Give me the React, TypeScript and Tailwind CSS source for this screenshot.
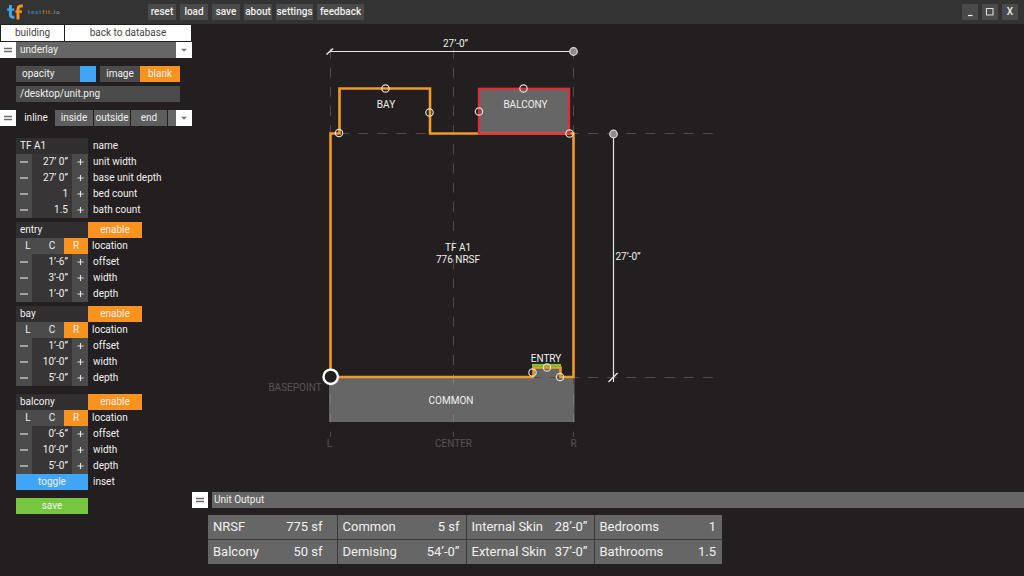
import { useState } from "react";

const FONT = "font-['Roboto','Liberation_Sans',sans-serif]";

function Grip() {
  return (
    <svg viewBox="0 0 16 16" className="size-4" aria-hidden="true">
      <path d="M4 6.5h8M4 9.5h8" stroke="#6b6b6b" strokeWidth="1.4" />
    </svg>
  );
}

function Caret() {
  return (
    <svg viewBox="0 0 16 16" className="size-4" aria-hidden="true">
      <path d="M5 6.8h6l-3 3z" fill="#777" />
    </svg>
  );
}

function Logo() {
  return (
    <div className="flex w-36 items-center gap-1 pl-1.5">
      <svg viewBox="0 0 18 18" className="size-[18px]" aria-hidden="true">
        <g fill="none" strokeWidth="3">
          <path d="M4.4 2v9.6q0 3.2 4 2.4" stroke="#41a5ee" />
          <path d="M1.2 6.6h7" stroke="#41a5ee" strokeWidth="2.4" />
          <path d="M12 16.6V6Q12 2.4 16.8 3" stroke="#f7931e" />
          <path d="M9.4 8.6h6.6" stroke="#f7931e" strokeWidth="2.4" />
        </g>
      </svg>
      <span className="text-[6px] leading-none font-medium tracking-[1px] text-[#9a9a9a]">
        <span className="text-[#3b8cc6]">test</span>
        <span className="text-[#cf8026]">fit</span>.io
      </span>
    </div>
  );
}

function TitleBar() {
  const button = "h-4 bg-[#4a4a4a] text-[10px] leading-4 font-medium text-[#f0f0f0]";
  return (
    <header className="flex h-6 shrink-0 items-center bg-[#333333]">
      <Logo />
      <nav className="flex gap-1 pl-1">
        <button className={`${button} w-7`}>reset</button>
        <button className={`${button} w-7`}>load</button>
        <button className={`${button} w-7`}>save</button>
        <button className={`${button} w-7`}>about</button>
        <button className={`${button} w-[37px]`}>settings</button>
        <button className={`${button} w-[47px]`}>feedback</button>
      </nav>
      <div className="ml-auto flex gap-1 pr-1.5">
        <button aria-label="Minimize" className="size-4 bg-[#4a4a4a]">
          <svg viewBox="0 0 16 16" className="size-4">
            <path d="M6 11.5h4.5" stroke="#eee" strokeWidth="1.2" />
          </svg>
        </button>
        <button aria-label="Maximize" className="size-4 bg-[#4a4a4a]">
          <svg viewBox="0 0 16 16" className="size-4">
            <path d="M4.5 4.5h6.5v6.5h-6.5z" fill="none" stroke="#ddd" strokeWidth="1.1" />
          </svg>
        </button>
        <button aria-label="Close" className="size-4 bg-[#4a4a4a] text-[10px] leading-4 font-medium text-[#eee]">
          X
        </button>
      </div>
    </header>
  );
}

type StepperProps = { id: string; label: string; value: string };

function Stepper({ id, label, value }: StepperProps) {
  const step = "flex w-4 items-center justify-center bg-[#4b4b4b]";
  return (
    <div className="flex h-4 items-center">
      <div className="flex h-4 w-[72px] bg-[#373536]">
        <button aria-label={`Decrease ${label}`} className={step}>
          <svg viewBox="0 0 16 16" className="size-4">
            <path d="M4 8h8" stroke="#ddd" strokeWidth="1.2" />
          </svg>
        </button>
        <input
          id={id}
          defaultValue={value}
          className="w-10 bg-transparent pr-1 text-right leading-4 outline-none"
        />
        <button aria-label={`Increase ${label}`} className={step}>
          <svg viewBox="0 0 16 16" className="size-4">
            <path d="M5.5 8h6M8.5 5v6" stroke="#ddd" strokeWidth="1.1" />
          </svg>
        </button>
      </div>
      <label htmlFor={id} className="pl-[5px]">
        {label}
      </label>
    </div>
  );
}

type FeatureProps = { name: string; offset: string; width: string; depth: string };

function Feature({ name, offset, width, depth }: FeatureProps) {
  const [side, setSide] = useState("R");
  const [enabled, setEnabled] = useState(true);
  return (
    <section>
      <div className="flex h-4 leading-4">
        <h3 className="w-[72px] bg-[#302e2f] pl-1">{name}</h3>
        <button
          aria-pressed={enabled}
          onClick={() => setEnabled(!enabled)}
          className="w-[54px] bg-[#f7931e] leading-4"
        >
          enable
        </button>
      </div>
      <div className="flex h-4 leading-4">
        {["L", "C", "R"].map((s) => (
          <button
            key={s}
            aria-pressed={side === s}
            onClick={() => setSide(s)}
            className={`w-6 leading-4 ${side === s ? "bg-[#f7931e]" : "bg-[#4b4b4b]"}`}
          >
            {s}
          </button>
        ))}
        <span className="pl-1">location</span>
      </div>
      <Stepper id={`${name}-offset`} label="offset" value={offset} />
      <Stepper id={`${name}-width`} label="width" value={width} />
      <Stepper id={`${name}-depth`} label="depth" value={depth} />
    </section>
  );
}

function Sidebar() {
  const [tab, setTab] = useState("inline");
  const tabs = [
    { name: "inline", width: "w-9" },
    { name: "inside", width: "w-[38px]" },
    { name: "outside", width: "w-9" },
    { name: "end", width: "w-9" },
  ];
  return (
    <aside className="w-48 shrink-0 text-[10px] leading-4 text-[#f0f0f0]">
      <div className="flex h-[17px] gap-px px-px pt-px text-[#444]">
        <button className="w-[63px] bg-white leading-4">building</button>
        <button className="flex-1 bg-white leading-4">back to database</button>
      </div>
      <div className="flex h-[17px] items-stretch pt-px">
        <button aria-label="Move underlay panel" className="w-4 bg-white">
          <Grip />
        </button>
        <h2 className="flex-1 bg-[#666666] pl-1">underlay</h2>
        <button aria-label="Collapse underlay panel" className="w-4 bg-white">
          <Caret />
        </button>
      </div>

      <div className="flex flex-col gap-1 px-4 pt-2 pr-3 pb-2">
        <div className="flex h-4 gap-1">
          <div className="relative w-20 bg-[#4b4b4b]">
            <label htmlFor="opacity" className="pointer-events-none absolute left-1.5">
              opacity
            </label>
            <input
              id="opacity"
              type="range"
              defaultValue={100}
              className="block h-4 w-full appearance-none bg-transparent [&::-webkit-slider-thumb]:h-4 [&::-webkit-slider-thumb]:w-4 [&::-webkit-slider-thumb]:appearance-none [&::-webkit-slider-thumb]:bg-[#41a5f5]"
            />
          </div>
          <div className="flex flex-1">
            <button className="flex-1 bg-[#4b4b4b] leading-4">image</button>
            <button className="flex-1 bg-[#f7931e] leading-4">blank</button>
          </div>
        </div>
        <input
          aria-label="Underlay file"
          defaultValue="/desktop/unit.png"
          className="h-4 w-full bg-[#4b4b4b] pl-1 leading-4 outline-none"
        />
      </div>

      <div className="flex h-4">
        <button aria-label="Move unit panel" className="w-4 bg-white">
          <Grip />
        </button>
        <div role="tablist" className="flex flex-1 gap-px pl-0.5">
          {tabs.map((t) => (
            <button
              key={t.name}
              role="tab"
              aria-selected={tab === t.name}
              onClick={() => setTab(t.name)}
              className={`${t.width} leading-4 ${tab === t.name ? "bg-[#231f20]" : "bg-[#5e5e5e]"}`}
            >
              {t.name}
            </button>
          ))}
          <span className="flex-1 bg-[#666666]" />
        </div>
        <button aria-label="Collapse unit panel" className="w-4 bg-white">
          <Caret />
        </button>
      </div>

      <div className="flex flex-col gap-1 pt-3 pl-4">
        <section>
          <div className="flex h-4 items-center">
            <input
              id="unit-name"
              defaultValue="TF A1"
              className="h-4 w-[72px] bg-[#302e2f] pl-1 leading-4 outline-none"
            />
            <label htmlFor="unit-name" className="pl-[5px]">
              name
            </label>
          </div>
          <Stepper id="unit-width" label="unit width" value="27’ 0”" />
          <Stepper id="unit-depth" label="base unit depth" value="27’ 0”" />
          <Stepper id="bed-count" label="bed count" value="1" />
          <Stepper id="bath-count" label="bath count" value="1.5" />
        </section>
        <Feature name="entry" offset="1’-6”" width="3’-0”" depth="1’-0”" />
        <Feature name="bay" offset="1’-0”" width="10’-0”" depth="5’-0”" />
        <div className="pt-1">
          <Feature name="balcony" offset="0’-6”" width="10’-0”" depth="5’-0”" />
          <div className="flex h-4">
            <button id="inset" className="w-[72px] bg-[#41a5f5] leading-4">
              toggle
            </button>
            <label htmlFor="inset" className="pl-[5px]">
              inset
            </label>
          </div>
        </div>
        <button className="mt-1 h-4 w-[72px] bg-[#76c63f] leading-4">save</button>
      </div>
    </aside>
  );
}

const handles = [
  [385.5, 88.5],
  [429.5, 112.5],
  [339, 133],
  [523.5, 88.5],
  [479, 111.5],
  [569.5, 133.5],
  [532.5, 372.5],
  [547, 367.5],
  [560, 377],
];

function FloorPlan() {
  return (
    <svg
      viewBox="192 24 832 467"
      className="block h-auto w-full"
      role="img"
      aria-label="Unit floor plan"
      fontSize="10"
      fill="#f0f0f0"
      textAnchor="middle"
    >
      <rect x="329" y="377" width="245.5" height="45" fill="#666666" />
      <rect x="534" y="367" width="26" height="11" fill="#666666" />
      <rect x="479" y="89" width="90" height="44" fill="#666666" />

      <g stroke="#4d4b4c" strokeWidth="1" strokeDasharray="10 9.15" fill="none">
        <path d="M330.5 48.5V436" />
        <path d="M453.5 48.5V436" />
        <path d="M573.5 48.5V436" />
        <path d="M339 133.5H714" />
        <path d="M530.5 377.5H714" />
      </g>
      <g stroke="#7b7b7b" strokeWidth="1" strokeDasharray="10 9.2" fill="none">
        <path d="M330.5 394V422M453.5 375V422M573.5 394V422" />
      </g>
      <path d="M330.5 432v5M453.5 432v5M573.5 432v5" stroke="#4d4b4c" />

      <path
        d="M534 377H330.5V133.5H339.5V88.5H430V133.5H573.5V377H560.5V367.5H533.5V377"
        fill="none"
        stroke="#f39a26"
        strokeWidth="2.6"
      />
      <rect x="479" y="88.8" width="90" height="44.7" fill="none" stroke="#dd2f3a" strokeWidth="2.3" />
      <path d="M532 365.2h29" stroke="#76c63f" strokeWidth="2.6" />

      <g stroke="#e6e6e6" strokeWidth="1.2" fill="none">
        <path d="M330 51.5H573" />
        <path d="M326.5 54.5l6.5-6" strokeWidth="1.6" />
        <path d="M613.5 134V382" />
        <path d="M608.5 382l9-9" strokeWidth="1.4" />
      </g>
      <g fill="#8c8c8c" stroke="#d8d8d8" strokeWidth="1.2">
        <circle cx="573.5" cy="51.5" r="3.8" />
        <circle cx="613.5" cy="134" r="3.8" />
      </g>
      <g fill="none" stroke="#e3dccf" strokeWidth="1.2">
        {handles.map(([x, y]) => (
          <circle key={`${x}-${y}`} cx={x} cy={y} r="3.7" />
        ))}
      </g>
      <circle cx="330.7" cy="376.8" r="7.2" fill="#231f20" stroke="#fff" strokeWidth="2.4" />

      <text x="455.5" y="47">27’-0”</text>
      <text x="386" y="108">BAY</text>
      <text x="525.5" y="108">BALCONY</text>
      <text x="458" y="251">TF A1</text>
      <text x="458" y="263">776 NRSF</text>
      <text x="628" y="260">27’-0”</text>
      <text x="546" y="362">ENTRY</text>
      <text x="451" y="404">COMMON</text>
      <g fill="#555354">
        <text x="295" y="391">BASEPOINT</text>
        <text x="329.5" y="447">L</text>
        <text x="453.5" y="447">CENTER</text>
        <text x="573.5" y="447">R</text>
      </g>
    </svg>
  );
}

const output = [
  [
    ["NRSF", "775 sf"],
    ["Common", "5 sf"],
    ["Internal Skin", "28’-0”"],
    ["Bedrooms", "1"],
  ],
  [
    ["Balcony", "50 sf"],
    ["Demising", "54’-0”"],
    ["External Skin", "37’-0”"],
    ["Bathrooms", "1.5"],
  ],
];

function UnitOutput() {
  return (
    <section className="text-[#f0f0f0]">
      <div className="flex h-4 gap-1">
        <button aria-label="Move output panel" className="w-4 bg-white">
          <Grip />
        </button>
        <h2 className="flex-1 bg-[#666666] pl-0.5 text-[10px] leading-4">Unit Output</h2>
      </div>
      <table className="mt-[7px] ml-4 w-[514px] table-fixed border-collapse text-[13px] leading-6">
        <colgroup>
          <col className="w-[72px]" />
          <col className="w-[57px]" />
          <col className="w-[80px]" />
          <col className="w-[49px]" />
          <col className="w-[83px]" />
          <col className="w-[45px]" />
          <col className="w-[80px]" />
          <col className="w-[48px]" />
        </colgroup>
        <tbody>
          {output.map((row, i) => (
            <tr key={i} className="border-b border-[#3a3839] bg-[#666666] last:border-b-0">
              {row.map(([name, value]) => [
                <th key={name} scope="row" className="h-6 p-0 pl-[5px] text-left font-normal whitespace-nowrap">
                  {name}
                </th>,
                <td
                  key={`${name}-value`}
                  className="h-6 border-r border-[#3a3839] p-0 pr-1.5 text-right whitespace-nowrap last:border-r-0 first-of-type:pr-[14px]"
                >
                  {value}
                </td>,
              ])}
            </tr>
          ))}
        </tbody>
      </table>
    </section>
  );
}

export default function App() {
  return (
    <div className={`flex min-h-screen flex-col bg-[#231f20] ${FONT}`}>
      <TitleBar />
      <div className="flex flex-1">
        <Sidebar />
        <main className="flex min-w-0 flex-1 flex-col gap-px">
          <FloorPlan />
          <UnitOutput />
        </main>
      </div>
    </div>
  );
}
